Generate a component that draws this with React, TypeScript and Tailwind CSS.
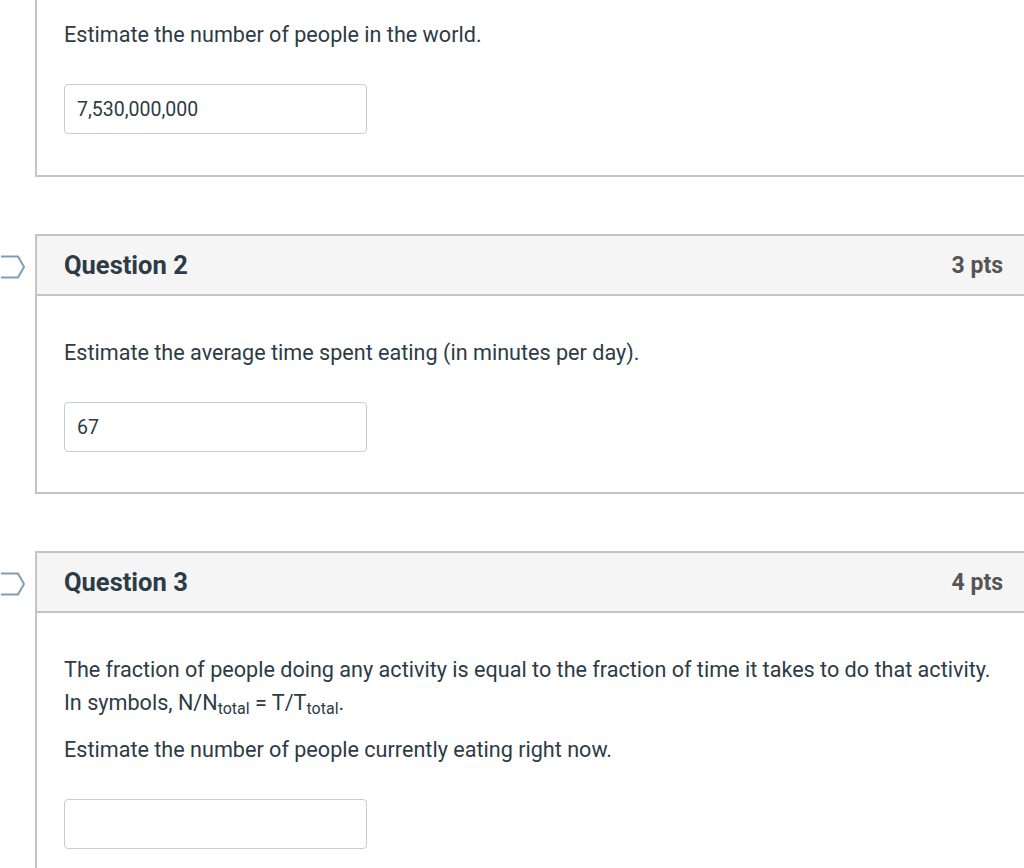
import React from 'react';

type Question = {
  title?: string;
  points?: string;
  body: React.ReactNode;
  answer: string;
};

const FlagIcon: React.FC = () => (
  <svg
    className="absolute left-[-36px] top-[19px]"
    width="26"
    height="24"
    viewBox="0 0 26 24"
    fill="none"
  >
    <path
      d="M-10 1.5 H17 L23 12 L17 22.5 H-10"
      stroke="#7f9db7"
      strokeWidth="2"
      strokeLinejoin="round"
    />
  </svg>
);

const AnswerBox: React.FC<{ value: string }> = ({ value }) => (
  <div className="w-[303px] h-[50px] border border-[#c7cdd1] rounded-[4px] bg-white flex items-center px-3 text-[19.5px] text-[#2d3b45]">
    {value}
  </div>
);

const questions: Question[] = [
  {
    title: 'Question 2',
    points: '3 pts',
    body: <p>Estimate the average time spent eating (in minutes per day).</p>,
    answer: '67',
  },
  {
    title: 'Question 3',
    points: '4 pts',
    body: (
      <>
        <p>
          The fraction of people doing any activity is equal to the fraction of time it takes to do that activity.
          <br />
          In symbols, N/N<sub className="text-[16px]">total</sub> = T/T<sub className="text-[16px]">total</sub>.
        </p>
        <p className="mt-[14px]">Estimate the number of people currently eating right now.</p>
      </>
    ),
    answer: '',
  },
];

const App: React.FC = () => {
  return (
    <div className="w-[1024px] h-[868px] overflow-hidden bg-white pl-[35px] font-['Roboto',sans-serif] text-[#2d3b45]">
      {/* previous question, header scrolled off the top */}
      <div className="mr-[-4px] border-l-2 border-r-2 border-b-2 border-[#c4c4c4] pl-[27px] pt-[18px] pb-[41px] text-[21.6px] leading-[33px]">
        <p>Estimate the number of people in the world.</p>
        <div className="mt-[33px]">
          <AnswerBox value="7,530,000,000" />
        </div>
      </div>

      {questions.map(q => (
        <div key={q.title} className="relative mt-[57px] mr-[-4px] border-2 border-[#c4c4c4]">
          <FlagIcon />
          <div className="h-[60px] bg-[#f5f5f5] border-b-2 border-[#c4c4c4] flex items-center justify-between pl-[27px] pr-[23px]">
            <h2 className="text-[25.5px] font-bold text-[#2d3b45]">{q.title}</h2>
            <span className="text-[23px] font-bold text-[#555555] pt-[2px]">{q.points}</span>
          </div>
          <div className="pl-[27px] pt-[40px] pb-[40px] text-[21.6px] leading-[33px]">
            {q.body}
            <div className="mt-[33px]">
              <AnswerBox value={q.answer} />
            </div>
          </div>
        </div>
      ))}
    </div>
  );
};

export default App;
